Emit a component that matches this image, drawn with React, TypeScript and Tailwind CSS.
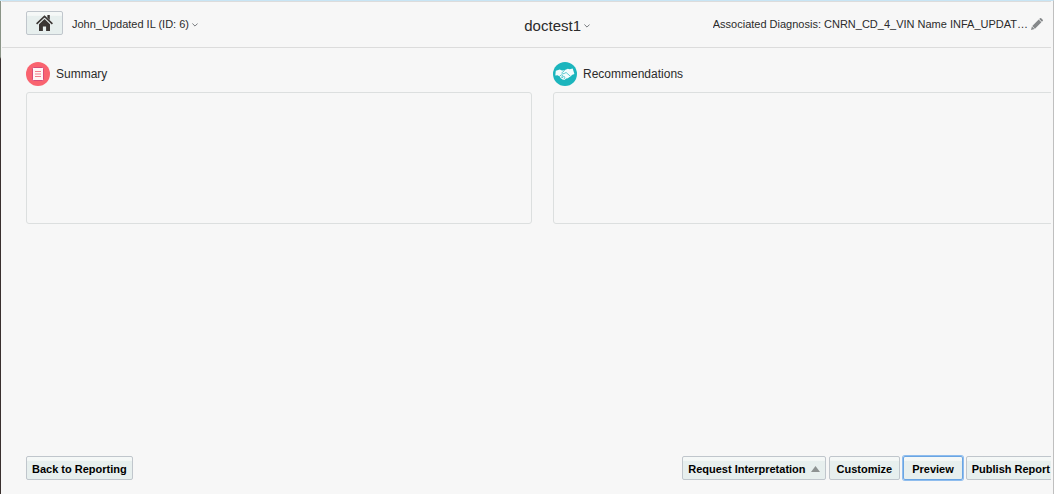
import React from 'react';

interface ActionButtonProps {
  children: React.ReactNode;
  active?: boolean;
  className?: string;
}

function ActionButton({ children, active, className = 'px-[7px]' }: ActionButtonProps) {
  return (
    <button
      type="button"
      className={`flex h-6 shrink-0 items-center justify-center rounded-xs border bg-linear-to-b from-[#f5f8f7] from-15% to-[#e7efee] to-20% pt-px text-[11px] leading-4 font-bold whitespace-nowrap text-black ${
        active ? 'border-[#6aa5e3] ring-1 ring-[#8fbdee]' : 'border-[#c0c6cc]'
      } ${className}`}
    >
      {children}
    </button>
  );
}

function Chevron() {
  return (
    <svg width="6" height="4" viewBox="0 0 6 4" fill="none" stroke="#777a7d" aria-hidden="true">
      <path d="M0.4 0.5 3 3.1 5.6 0.5" />
    </svg>
  );
}

function HomeIcon() {
  return (
    <svg width="17" height="16" viewBox="0 0 17 16" aria-hidden="true">
      <path fill="#3b3634" d="M8.5 3.9 3 9.2V16h3.9v-4.6h3.2V16H14V9.2zM11.4 0h2.4v5l-2.4-2.2z" />
      <path fill="none" stroke="#3b3634" strokeWidth="1.6" d="M.6 8.9 8.5 1.3l7.9 7.6" />
    </svg>
  );
}

function PencilIcon() {
  return (
    <svg width="12" height="12" viewBox="0 0 12 12" fill="#85888a" aria-hidden="true">
      <path d="M0 12 .9 8.4 3.6 11.1zM1.3 8 7.7 1.6l2.7 2.7L4 10.7zM8.2 1.1l.8-.8q.6-.5 1.2 0l1.5 1.5q.5.6 0 1.2l-.8.8z" />
    </svg>
  );
}

function SummaryIcon() {
  return (
    <svg width="24" height="24" viewBox="0 0 24 24" aria-hidden="true">
      <circle cx="12" cy="12" r="12" fill="#f9636f" />
      <rect x="6.5" y="5.5" width="11" height="13" rx="1" fill="#fff5f5" stroke="#d84a78" />
      <path stroke="#f07f8b" d="M9 9.5h6M9 12h6M9 14.5h6" />
    </svg>
  );
}

function HandshakeIcon() {
  return (
    <svg width="24" height="24" viewBox="0 0 24 24" aria-hidden="true">
      <circle cx="12" cy="12" r="12" fill="#1cb5bd" />
      <path
        fill="#f4fcfc"
        d="M2.8 8.7 6.8 7.5 9 8.6l2.4-.4L14.8 6.7l1.9.5 3-.7 1.7 5.6-2.6 1-.9 1.4-1.8.7-1.2 1.1-1.7.2-1.8 1.5-1.9-.5-1.7-1.2-1.5-2-1.8-1-2.2.1z"
      />
      <path
        fill="none"
        stroke="#1cb5bd"
        strokeWidth="0.7"
        d="M11.6 8.4 8.7 11q.6 1.4 2.4.5l2-1 4.6 4M6.3 14.5l2-1.7 1.4.6-1.2 2.3M9 16l1.9-1.7 1.1 1-1.1 1.9"
      />
    </svg>
  );
}

interface PanelProps {
  id: string;
  title: string;
  icon: React.ReactNode;
}

function Panel({ id, title, icon }: PanelProps) {
  return (
    <section>
      <label htmlFor={id} className="flex items-center gap-[6px] text-xs text-[#2b2b2b]">
        {icon}
        <span>{title}</span>
      </label>
      <textarea
        id={id}
        className="mt-[6px] block h-[132px] w-full resize-none rounded-[3px] border border-[#dcdfdf] bg-[#f7f7f7] p-2 text-xs focus:outline-none"
      />
    </section>
  );
}

export default function App() {
  return (
    <div className="flex min-h-screen border-t border-r border-t-[#c8e5f5] border-r-[#bfbfbf] bg-[#f7f7f7] font-['Liberation_Sans',Arial,sans-serif] text-[#2b2b2b]">
      <div className="w-px shrink-0 bg-linear-to-b from-[#8b9487] from-[56px] to-[#3a302e] to-[58px]" />
      <div className="mr-[2px] ml-px flex min-w-0 flex-1 flex-col overflow-hidden border-t border-[#dcdcdc]">
        <header className="grid h-[46px] grid-cols-[11fr_auto_10fr] items-start border-b border-[#dcdcdc] pt-[9px] pr-2 pl-6">
          <div className="flex h-6 items-center gap-[9px]">
            <button
              type="button"
              aria-label="Home"
              className="flex h-6 w-[37px] items-center justify-center rounded-xs border border-[#c0c6cc] bg-linear-to-b from-[#f5f8f7] from-15% to-[#e7efee] to-20% pr-px"
            >
              <HomeIcon />
            </button>
            <button type="button" className="flex items-center gap-[3px] pt-px text-[11px] leading-4 whitespace-nowrap">
              John_Updated IL (ID: 6)
              <span className="pt-[3px]">
                <Chevron />
              </span>
            </button>
          </div>
          <button type="button" className="flex items-center gap-[3px] pt-[5px] text-[15px] leading-5">
            doctest1
            <Chevron />
          </button>
          <div className="flex h-6 min-w-0 items-center justify-end gap-[3px] pt-px text-[11px] leading-4">
            <span className="truncate">Associated Diagnosis: CNRN_CD_4_VIN Name INFA_UPDAT…</span>
            <button type="button" aria-label="Edit diagnosis" className="shrink-0 pt-px">
              <PencilIcon />
            </button>
          </div>
        </header>

        {/* both rows run slightly past the clipped right edge */}
        <main className="-mr-2 grid flex-1 grid-cols-2 content-start gap-[21px] pt-[14px] pl-6">
          <Panel id="summary" title="Summary" icon={<SummaryIcon />} />
          <Panel id="recommendations" title="Recommendations" icon={<HandshakeIcon />} />
        </main>

        <footer className="-mr-[5px] flex items-center justify-between pb-[14px] pl-6">
          <ActionButton className="px-[5px]">Back to Reporting</ActionButton>
          <div className="flex gap-[3px]">
            <ActionButton className="gap-[5px] px-[5px]">
              Request Interpretation
              <svg width="9" height="6" viewBox="0 0 9 6" fill="#8d9292" aria-hidden="true">
                <path d="M4.5 0 9 6H0z" />
              </svg>
            </ActionButton>
            <ActionButton>Customize</ActionButton>
            <ActionButton active className="px-2">
              Preview
            </ActionButton>
            <ActionButton className="px-[5px]">Publish Report</ActionButton>
          </div>
        </footer>
      </div>
    </div>
  );
}
